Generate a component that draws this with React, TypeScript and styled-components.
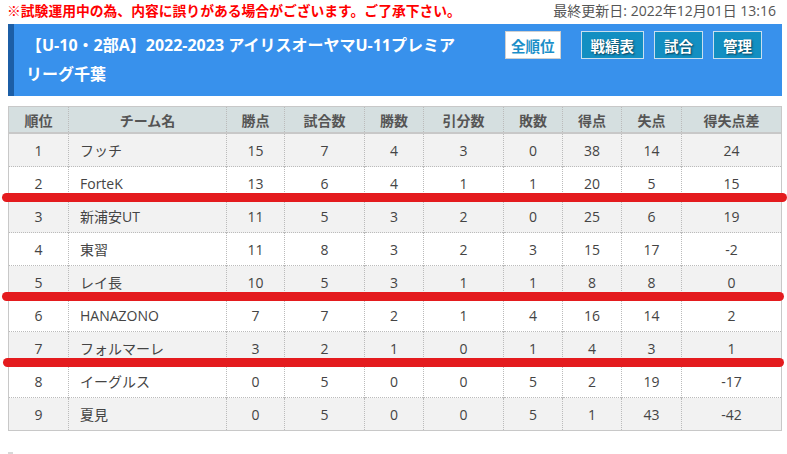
import React from 'react';
import styled, { createGlobalStyle } from 'styled-components';

const GlobalStyle = createGlobalStyle`
  html, body {
    margin: 0;
    padding: 0;
    overflow: hidden;
    background: #ffffff;
  }
  body {
    font-family: "Open Sans", "Noto Sans CJK JP", sans-serif;
    color: #444;
  }
`;

interface Team {
  rank: number;
  name: string;
  points: number;
  played: number;
  won: number;
  drawn: number;
  lost: number;
  gf: number;
  ga: number;
  diff: number;
}

const teams: Team[] = [
  { rank: 1, name: 'フッチ', points: 15, played: 7, won: 4, drawn: 3, lost: 0, gf: 38, ga: 14, diff: 24 },
  { rank: 2, name: 'ForteK', points: 13, played: 6, won: 4, drawn: 1, lost: 1, gf: 20, ga: 5, diff: 15 },
  { rank: 3, name: '新浦安UT', points: 11, played: 5, won: 3, drawn: 2, lost: 0, gf: 25, ga: 6, diff: 19 },
  { rank: 4, name: '東習', points: 11, played: 8, won: 3, drawn: 2, lost: 3, gf: 15, ga: 17, diff: -2 },
  { rank: 5, name: 'レイ長', points: 10, played: 5, won: 3, drawn: 1, lost: 1, gf: 8, ga: 8, diff: 0 },
  { rank: 6, name: 'HANAZONO', points: 7, played: 7, won: 2, drawn: 1, lost: 4, gf: 16, ga: 14, diff: 2 },
  { rank: 7, name: 'フォルマーレ', points: 3, played: 2, won: 1, drawn: 0, lost: 1, gf: 4, ga: 3, diff: 1 },
  { rank: 8, name: 'イーグルス', points: 0, played: 5, won: 0, drawn: 0, lost: 5, gf: 2, ga: 19, diff: -17 },
  { rank: 9, name: '夏見', points: 0, played: 5, won: 0, drawn: 0, lost: 5, gf: 1, ga: 43, diff: -42 },
];

const columns = [
  { label: '順位', width: 60 },
  { label: 'チーム名', width: 158 },
  { label: '勝点', width: 58 },
  { label: '試合数', width: 80 },
  { label: '勝数', width: 59 },
  { label: '引分数', width: 80 },
  { label: '敗数', width: 59 },
  { label: '得点', width: 59 },
  { label: '失点', width: 60 },
  { label: '得失点差', width: 100 },
];

const Page = styled.div`
  position: relative;
  width: 787px;
  height: 454px;
`;

const Content = styled.div`
  width: 774px;
  margin-left: 8px;
`;

const NoticeBar = styled.div`
  display: flex;
  justify-content: space-between;
  align-items: center;
  height: 19px;
  margin-bottom: 5px;
`;

const Notice = styled.span`
  color: #ff0000;
  font-weight: bold;
  font-size: 13.8px;
  margin-left: -1px;
`;

const Updated = styled.span`
  color: #555;
  font-size: 14px;
  margin-right: 6px;
`;

const Header = styled.div`
  display: flex;
  align-items: flex-start;
  background: #3891ec;
  border-left: 6px solid #1c5ea6;
  padding: 7px 20px 7px 12px;
`;

const Title = styled.h1`
  width: 438px;
  margin: 0;
  color: #ffffff;
  font-size: 16px;
  font-weight: bold;
  line-height: 29px;
`;

const ButtonGroup = styled.div`
  display: flex;
  margin-left: auto;
  gap: 10px;
`;

const NavButton = styled.a<{ $active?: boolean; $pad: number }>`
  display: flex;
  align-items: center;
  justify-content: center;
  height: 28px;
  box-sizing: border-box;
  padding: 0 ${(p) => p.$pad}px;
  font-size: 14.5px;
  font-weight: bold;
  cursor: pointer;
  background: ${(p) => (p.$active ? '#ffffff' : '#128fc2')};
  color: ${(p) => (p.$active ? '#1b8fc9' : '#ffffff')};
  border: 1px solid ${(p) => (p.$active ? '#d0d0d0' : '#c9dfee')};
  text-shadow: ${(p) => (p.$active ? 'none' : '1px 1px 2px rgba(0, 0, 0, 0.6)')};
  margin-right: ${(p) => (p.$active ? 10 : 0)}px;
`;

const Table = styled.table`
  width: 773px;
  margin-top: 10px;
  border-collapse: collapse;
  table-layout: fixed;
  border: 1px solid #c8c8c8;
  font-size: 14px;
`;

const HeadCell = styled.th`
  height: 25px;
  padding: 0;
  background: #d5dfe0;
  color: #555;
  font-weight: bold;
  font-size: 14px;
  border-left: 1px dotted #bbb;
  border-bottom: 2px solid #c8c8c8;
  &:first-child {
    border-left: none;
  }
`;

const Row = styled.tr<{ $odd: boolean }>`
  background: ${(p) => (p.$odd ? '#f2f2f2' : '#ffffff')};
`;

const Cell = styled.td<{ $left?: boolean }>`
  height: 32px;
  padding: 0 ${(p) => (p.$left ? '11px' : '0')};
  text-align: ${(p) => (p.$left ? 'left' : 'center')};
  color: #444;
  border-left: 1px dotted #bbb;
  border-top: 1px dotted #bbb;
  &:first-child {
    border-left: none;
  }
`;

const RedMark = styled.div<{ $top: number; $left: number; $right: number }>`
  position: absolute;
  top: ${(p) => p.$top}px;
  left: ${(p) => p.$left}px;
  width: ${(p) => p.$right - p.$left}px;
  height: 9px;
  border-radius: 5px;
  background: #e41b1e;
`;

const Stub = styled.div`
  width: 5px;
  height: 4px;
  margin-top: 21px;
  background: #d8d8d8;
`;

const App: React.FC = () => {
  return (
    <Page>
      <GlobalStyle />
      <Content>
        <NoticeBar>
          <Notice>※試験運用中の為、内容に誤りがある場合がございます。ご了承下さい。</Notice>
          <Updated>最終更新日: 2022年12月01日 13:16</Updated>
        </NoticeBar>
        <Header>
          <Title>【U-10・2部A】2022-2023 アイリスオーヤマU-11プレミアリーグ千葉</Title>
          <ButtonGroup>
            <NavButton $active $pad={5}>全順位</NavButton>
            <NavButton $pad={9}>戦績表</NavButton>
            <NavButton $pad={9}>試合</NavButton>
            <NavButton $pad={9}>管理</NavButton>
          </ButtonGroup>
        </Header>
        <Table>
          <colgroup>
            {columns.map((c) => (
              <col key={c.label} style={{ width: c.width }} />
            ))}
          </colgroup>
          <thead>
            <tr>
              {columns.map((c) => (
                <HeadCell key={c.label}>{c.label}</HeadCell>
              ))}
            </tr>
          </thead>
          <tbody>
            {teams.map((t) => (
              <Row key={t.rank} $odd={t.rank % 2 === 1}>
                <Cell>{t.rank}</Cell>
                <Cell $left>{t.name}</Cell>
                <Cell>{t.points}</Cell>
                <Cell>{t.played}</Cell>
                <Cell>{t.won}</Cell>
                <Cell>{t.drawn}</Cell>
                <Cell>{t.lost}</Cell>
                <Cell>{t.gf}</Cell>
                <Cell>{t.ga}</Cell>
                <Cell>{t.diff}</Cell>
              </Row>
            ))}
          </tbody>
        </Table>
        <Stub />
      </Content>
      <RedMark $top={193} $left={2} $right={787} />
      <RedMark $top={292} $left={2} $right={784} />
      <RedMark $top={358} $left={3} $right={784} />
    </Page>
  );
};

export default App;
